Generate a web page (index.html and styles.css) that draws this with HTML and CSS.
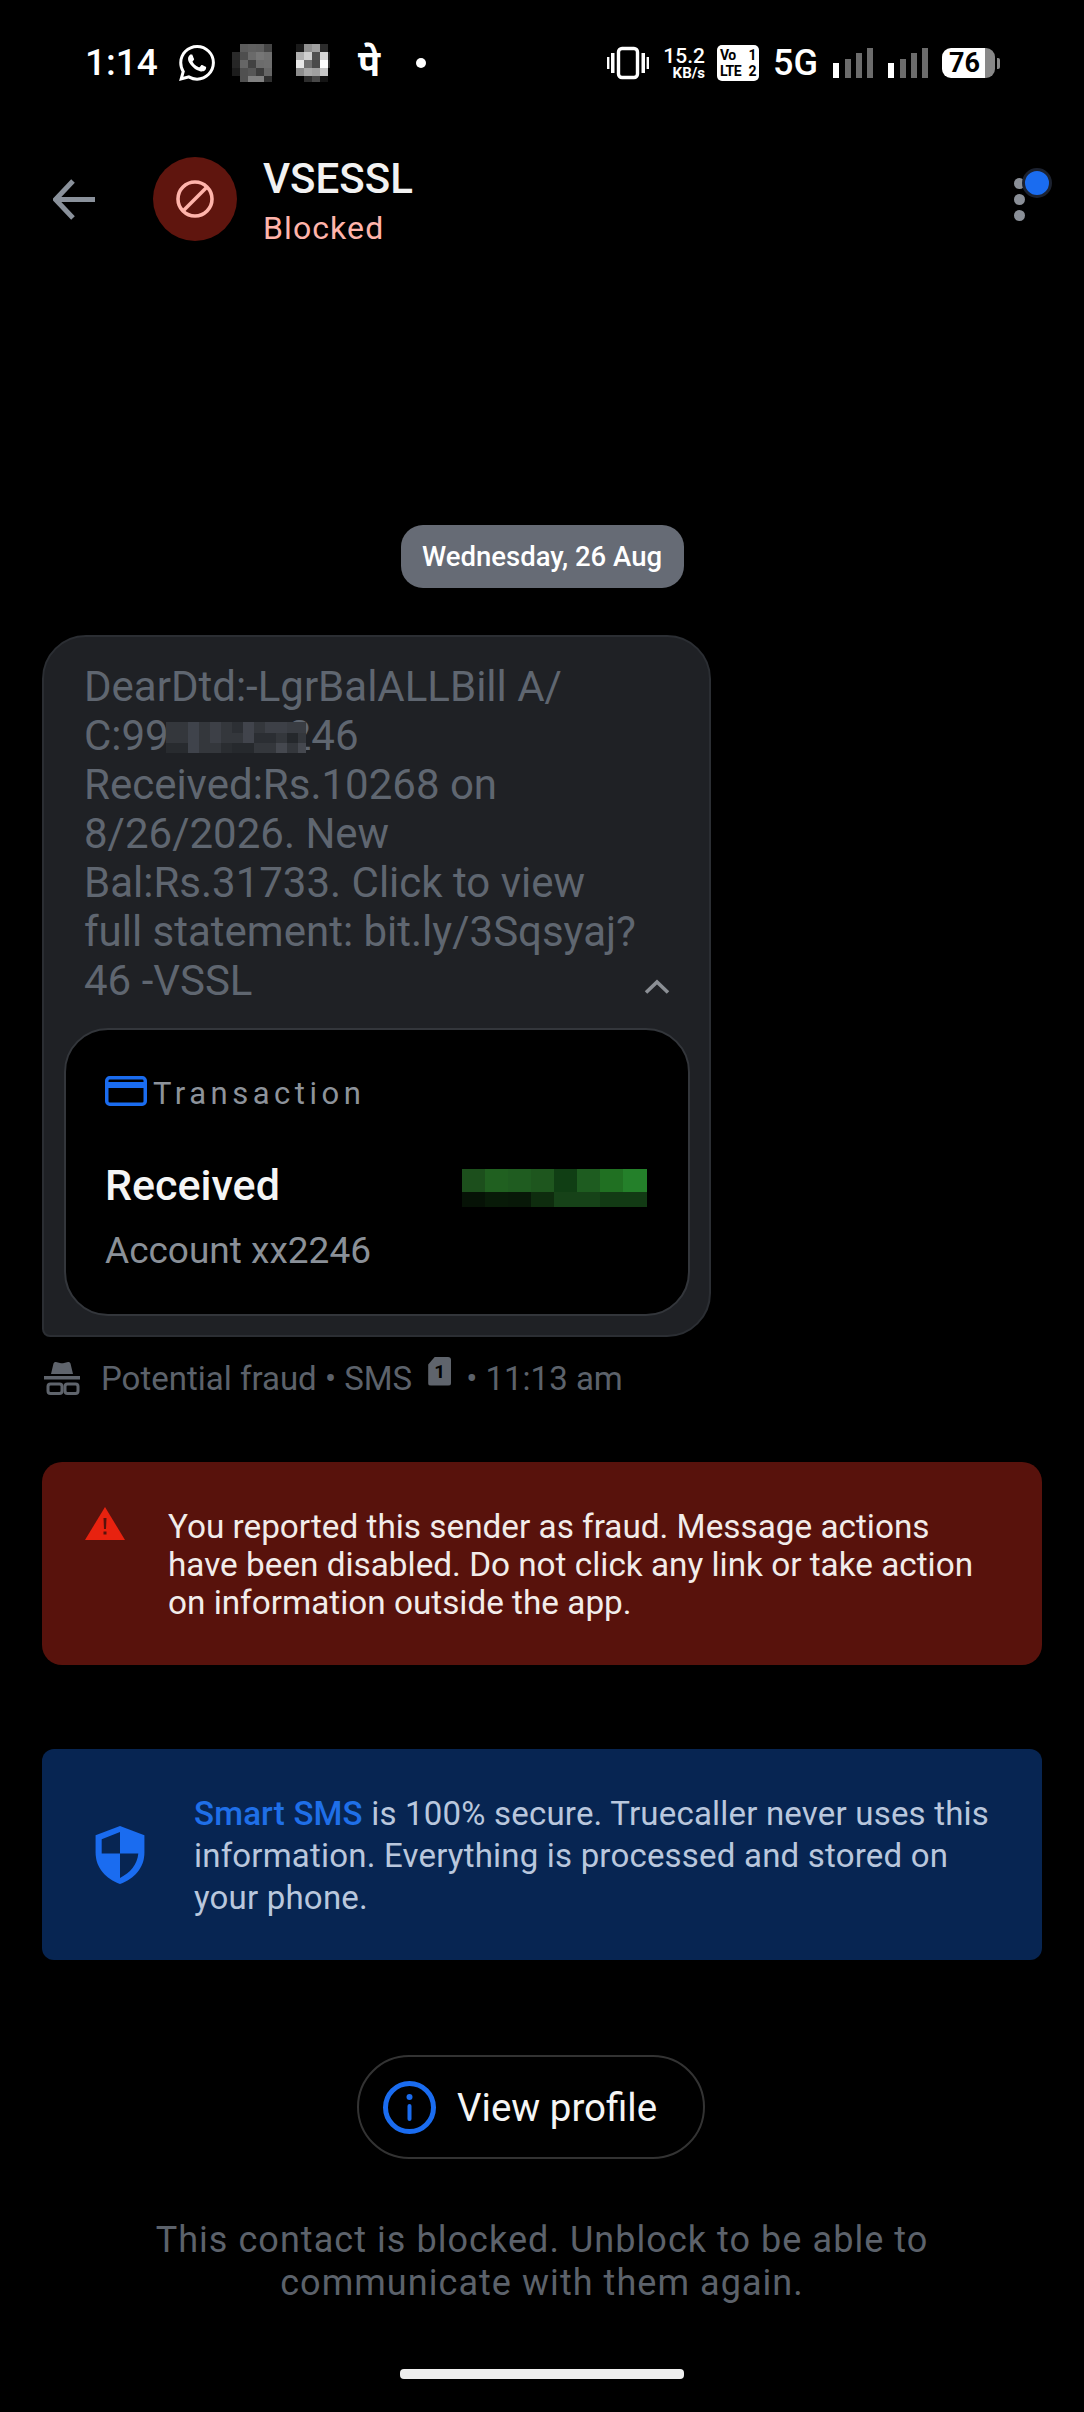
FILE: index.html
```html
<!DOCTYPE html>
<html lang="en">
<head>
<meta charset="utf-8">
<title>VSESSL</title>
<link rel="stylesheet" href="styles.css">
</head>
<body>
<div class="screen">
  <div class="status">
    <span class="time">1:14</span>
    <svg class="wa" viewBox="0 0 24 24" width="36" height="36"><path fill="#fff" d="M17.472 14.382c-.297-.149-1.758-.867-2.03-.967-.273-.099-.471-.148-.67.15-.197.297-.767.966-.94 1.164-.173.199-.347.223-.644.075-.297-.15-1.255-.463-2.39-1.475-.883-.788-1.48-1.761-1.653-2.059-.173-.297-.018-.458.13-.606.134-.133.298-.347.446-.52.149-.174.198-.298.298-.497.099-.198.05-.371-.025-.52-.075-.149-.669-1.612-.916-2.207-.242-.579-.487-.5-.669-.51-.173-.008-.371-.01-.57-.01-.198 0-.52.074-.792.372-.272.297-1.04 1.016-1.04 2.479 0 1.462 1.065 2.875 1.213 3.074.149.198 2.096 3.2 5.077 4.487.709.306 1.262.489 1.694.625.712.227 1.36.195 1.871.118.571-.085 1.758-.719 2.006-1.413.248-.694.248-1.289.173-1.413-.074-.124-.272-.198-.57-.347m-5.421 7.403h-.004a9.87 9.87 0 01-5.031-1.378l-.361-.214-3.741.982.998-3.648-.235-.374a9.86 9.86 0 01-1.51-5.26c.001-5.45 4.436-9.884 9.888-9.884 2.64 0 5.122 1.03 6.988 2.898a9.825 9.825 0 012.893 6.994c-.003 5.45-4.437 9.884-9.885 9.884m8.413-18.297A11.815 11.815 0 0012.05 0C5.495 0 .16 5.335.157 11.892c0 2.096.547 4.142 1.588 5.945L.057 24l6.305-1.654a11.882 11.882 0 005.683 1.448h.005c6.554 0 11.89-5.335 11.893-11.893a11.821 11.821 0 00-3.48-8.413z"/></svg>
    <svg class="mos1" viewBox="0 0 40 38" width="40" height="38" shape-rendering="crispEdges">
      <rect x="8" width="8" height="8" fill="#5c5c5c"/><rect x="16" width="8" height="8" fill="#606060"/><rect x="24" width="8" height="8" fill="#5e5e5e"/><rect x="32" width="8" height="8" fill="#454545"/>
      <rect y="8" width="8" height="8" fill="#2a2a2a"/><rect x="8" y="8" width="8" height="8" fill="#4e4e4e"/><rect x="16" y="8" width="8" height="8" fill="#6a6a6a"/><rect x="24" y="8" width="8" height="8" fill="#767676"/><rect x="32" y="8" width="8" height="8" fill="#707070"/>
      <rect y="16" width="8" height="8" fill="#262626"/><rect x="8" y="16" width="8" height="8" fill="#666"/><rect x="16" y="16" width="8" height="8" fill="#424242"/><rect x="24" y="16" width="8" height="8" fill="#6c6c6c"/><rect x="32" y="16" width="8" height="8" fill="#6e6e6e"/>
      <rect y="24" width="8" height="8" fill="#1c1c1c"/><rect x="8" y="24" width="8" height="8" fill="#505050"/><rect x="16" y="24" width="8" height="8" fill="#565656"/><rect x="24" y="24" width="8" height="8" fill="#3c3c3c"/><rect x="32" y="24" width="8" height="8" fill="#666"/>
      <rect x="8" y="32" width="8" height="6" fill="#505050"/><rect x="16" y="32" width="16" height="6" fill="#808080"/><rect x="32" y="32" width="8" height="6" fill="#303030"/>
    </svg>
    <svg class="mos2" viewBox="0 0 34 38" width="34" height="38" shape-rendering="crispEdges">
      <rect width="8" height="8" fill="#1a1a1a"/><rect x="8" width="8" height="8" fill="#909090"/><rect x="16" width="8" height="8" fill="#a0a0a0"/><rect x="24" width="8" height="8" fill="#2c2c2c"/>
      <rect y="8" width="8" height="8" fill="#b0b0b0"/><rect x="8" y="8" width="8" height="8" fill="#d0d0d0"/><rect x="16" y="8" width="8" height="8" fill="#505050"/><rect x="24" y="8" width="8" height="8" fill="#d8d8d8"/><rect x="32" y="8" width="2" height="8" fill="#222"/>
      <rect y="16" width="8" height="8" fill="#e8e8e8"/><rect x="8" y="16" width="8" height="8" fill="#707070"/><rect x="16" y="16" width="8" height="8" fill="#4a4a4a"/><rect x="24" y="16" width="8" height="8" fill="#fff"/><rect x="32" y="16" width="2" height="8" fill="#333"/>
      <rect y="24" width="8" height="8" fill="#8c8c8c"/><rect x="8" y="24" width="8" height="8" fill="#a8a8a8"/><rect x="16" y="24" width="8" height="8" fill="#a0a0a0"/><rect x="24" y="24" width="8" height="8" fill="#c8c8c8"/>
      <rect x="8" y="32" width="8" height="6" fill="#2e2e2e"/><rect x="16" y="32" width="8" height="6" fill="#484848"/><rect x="24" y="32" width="8" height="6" fill="#141414"/>
    </svg>
    <span class="pe">पे</span>
    <span class="sdot"></span>
    <div class="sright">
      <svg class="vib" viewBox="0 0 42 34" width="42" height="34"><rect x="11.5" y="2.5" width="19" height="29" rx="3.5" fill="none" stroke="#fff" stroke-width="3.4"/><path fill="#fff" d="M4 7h3.500v20H4zM34.500 7H38v20h-3.500zM0 11h2.400v12H0zM39.600 11H42v12h-2.400z"/></svg>
      <div class="speed"><span class="sp1">15.2</span><span class="sp2">KB/s</span></div>
      <div class="volte"><span>Vo</span><span>1</span><span>LTE</span><span>2</span></div>
      <span class="fiveg">5G</span>
      <svg class="sig" viewBox="0 0 40 30" width="40" height="30" shape-rendering="crispEdges"><rect y="15" width="6" height="15" fill="#fff"/><rect x="11.500" y="11" width="6" height="19" fill="#6c6c6c"/><rect x="23" y="5" width="6" height="25" fill="#6c6c6c"/><rect x="34" width="6" height="30" fill="#6c6c6c"/></svg>
      <svg class="sig sig2" viewBox="0 0 40 30" width="40" height="30" shape-rendering="crispEdges"><rect y="15" width="6" height="15" fill="#fff"/><rect x="11.500" y="11" width="6" height="19" fill="#6c6c6c"/><rect x="23" y="5" width="6" height="25" fill="#6c6c6c"/><rect x="34" width="6" height="30" fill="#6c6c6c"/></svg>
      <div class="batt"><span class="batt-n">76</span></div>
      <span class="tip"></span>
    </div>
  </div>

  <div class="header">
    <svg class="back" viewBox="0 0 42 41" width="42" height="41"><path d="M42 20.500H5M20 2 2.500 20.500 20 39" fill="none" stroke="#8a919b" stroke-width="5"/></svg>
    <div class="avatar">
      <svg viewBox="0 0 38 38" width="38" height="38"><circle cx="19" cy="19" r="17" fill="none" stroke="#ffb4ab" stroke-width="3.600"/><path d="M7 31 31 7" stroke="#ffb4ab" stroke-width="3.600"/></svg>
    </div>
    <div class="peer">
      <div class="peer-name">VSESSL</div>
      <div class="peer-state">Blocked</div>
    </div>
    <div class="more">
      <span class="more-dot"></span><span class="more-dot"></span><span class="more-dot"></span>
      <span class="badge"></span>
    </div>
  </div>

  <div class="date">Wednesday, 26 Aug</div>

  <div class="bubble">
    <div class="msg">
      DearDtd:-LgrBalALLBill A/<br>
      C:99<svg class="mask" viewBox="0 0 140 31" width="140" height="31" shape-rendering="crispEdges">
        <rect width="140" height="31" fill="#34373c"/>
        <rect x="22" width="11" height="31" fill="#3f434b"/><rect x="44" width="11" height="21" fill="#3d4047"/><rect x="66" width="11" height="11" fill="#2c2f34"/><rect x="77" width="11" height="21" fill="#41444c"/><rect x="99" width="22" height="11" fill="#3d4047"/><rect x="121" width="19" height="11" fill="#393c42"/>
        <rect y="21" width="22" height="10" fill="#282b2f"/><rect x="55" y="21" width="11" height="10" fill="#2a2d31"/><rect x="66" y="21" width="22" height="10" fill="#26292d"/><rect x="88" y="11" width="22" height="10" fill="#2b2e33"/><rect x="110" y="21" width="11" height="10" fill="#45484f"/><rect x="121" y="11" width="11" height="10" fill="#25282c"/><rect x="132" y="21" width="8" height="10" fill="#45484f"/>
      </svg>246<br>
      Received:Rs.10268 on<br>
      8/26/2026. New<br>
      Bal:Rs.31733. Click to view<br>
      full statement: bit.ly/3Sqsyaj?
      <div class="msg-last"><span>46 -VSSL</span><svg class="chev" viewBox="0 0 26 15" width="26" height="15"><path d="M2 13.500 13 3l11 10.500" fill="none" stroke="#8b8f95" stroke-width="3.600"/></svg></div>
    </div>
    <div class="tx">
      <div class="tx-head">
        <svg viewBox="0 0 42 30" width="42" height="30"><rect x="1.750" y="1.750" width="38.500" height="26.500" rx="3" fill="none" stroke="#1a6cf0" stroke-width="3.500"/><rect x="2" y="6" width="38" height="6" fill="#1a6cf0"/></svg>
        <span class="tx-label">Transaction</span>
      </div>
      <div class="tx-row">
        <span class="tx-title">Received</span>
        <svg class="amount" viewBox="0 0 185 38" width="185" height="38" shape-rendering="crispEdges">
          <rect width="24" height="23" fill="#1c4f1c"/><rect x="23" width="24" height="23" fill="#206020"/><rect x="46" width="24" height="23" fill="#1f5c20"/><rect x="69" width="24" height="23" fill="#1e561e"/><rect x="92" width="24" height="23" fill="#103e14"/><rect x="115" width="24" height="23" fill="#1e5c20"/><rect x="138" width="24" height="23" fill="#207022"/><rect x="161" width="24" height="23" fill="#24802a"/>
          <rect y="23" width="24" height="15" fill="#061206"/><rect x="23" y="23" width="24" height="15" fill="#081a08"/><rect x="46" y="23" width="24" height="15" fill="#081808"/><rect x="69" y="23" width="24" height="15" fill="#0e2c0e"/><rect x="92" y="23" width="24" height="15" fill="#164218"/><rect x="115" y="23" width="24" height="15" fill="#164218"/><rect x="138" y="23" width="24" height="15" fill="#123a14"/><rect x="161" y="23" width="24" height="15" fill="#123a14"/>
        </svg>
      </div>
      <div class="tx-acct">Account xx2246</div>
    </div>
  </div>

  <div class="meta">
    <svg class="spy" viewBox="0 0 38 34" width="38" height="34"><path fill="#5f646c" d="M7 13 9.500 2.500Q10 .5 12 1l4 1q2 .5 4 0l4-1q2-.5 2.500 1.500L29 13zM0 15h36v3.500H0z"/><g fill="none" stroke="#5f646c" stroke-width="3"><rect x="4" y="23" width="14" height="9.500" rx="2.500"/><rect x="21" y="23" width="13" height="9.500" rx="2.500"/></g></svg>
    <span class="meta-t">Potential fraud • SMS</span>
    <span class="sim">1</span>
    <span class="meta-t">• 11:13 am</span>
  </div>

  <div class="alert">
    <svg viewBox="0 0 40 33" width="40" height="33"><path d="M20 0 40 33H0z" fill="#e8220f"/><path d="M18.500 11h3l-.5 11h-2zM18.500 24.500h3v3h-3z" fill="#58120c"/></svg>
    <p>You reported this sender as fraud. Message actions<br>have been disabled. Do not click any link or take action<br>on information outside the app.</p>
  </div>

  <div class="secure">
    <svg viewBox="0 0 48 57" width="50" height="58"><path fill="#1a6cf0" d="M24 0 48 9v17c0 15-10 26-24 31C10 52 0 41 0 26V9z"/><path fill="#072552" d="M6 13 24 6v21H6zM24 27h18c-1 11-8 19-18 24z"/></svg>
    <p><b>Smart SMS</b> is 100% secure. Truecaller never uses this<br>information. Everything is processed and stored on<br>your phone.</p>
  </div>

  <div class="profile">
    <svg viewBox="0 0 53 53" width="53" height="53"><circle cx="26.500" cy="26.500" r="24" fill="none" stroke="#1a6cf0" stroke-width="5"/><circle cx="26.500" cy="16" r="3" fill="#1a6cf0"/><rect x="24.500" y="23" width="4" height="17" rx="2" fill="#1a6cf0"/></svg>
    <span>View profile</span>
  </div>

  <p class="note">This contact is blocked. Unblock to be able to<br>communicate with them again.</p>

  <div class="home"></div>
</div>
</body>
</html>
```
FILE: styles.css
```css
* { box-sizing: border-box; }
html, body { margin: 0; padding: 0; background: #000; }
.screen { width: 1084px; height: 2412px; overflow: hidden; background: #000; color: #fff; font-family: Roboto, "Noto Sans", sans-serif; }
svg { display: block; flex: none; }

.status { display: flex; align-items: center; height: 126px; padding: 0 84px 0 85px; }
.time { font-size: 37px; font-weight: 500; line-height: 40px; width: 72px; white-space: nowrap; }
.wa { margin-left: 22px; }
.mos1 { margin-left: 17px; }
.mos2 { margin-left: 24px; }
.pe { margin-left: 28px; width: 26px; font-size: 36px; font-weight: 700; line-height: 40px; font-family: "Noto Sans", Roboto, sans-serif; }
.sdot { margin-left: 32px; width: 10px; height: 10px; border-radius: 50%; background: #fff; }
.sright { display: flex; align-items: center; margin-left: auto; }
.vib { margin-right: 15px; }
.speed { display: flex; flex-direction: column; align-items: flex-end; width: 41px; margin-right: 12px; font-weight: 500; }
.sp1 { font-size: 21px; line-height: 20px; }
.sp2 { font-size: 15px; line-height: 15px; font-weight: 700; }
.volte { display: grid; grid-template-columns: auto auto; justify-content: space-between; width: 42px; height: 36px; padding: 2px 3px; border-radius: 5px; background: #fff; color: #000; font-size: 14px; line-height: 16px; font-weight: 700; letter-spacing: -0.5px; }
.fiveg { margin-left: 14px; width: 44px; font-size: 36px; font-weight: 500; line-height: 36px; white-space: nowrap; }
.sig { margin-left: 16px; }
.sig2 { margin-left: 15px; }
.batt { display: flex; justify-content: center; align-items: center; width: 53px; height: 30px; margin-left: 14px; padding-right: 8px; border-radius: 9px; background: linear-gradient(90deg, #fff 82%, #888 82%); }
.batt-n { color: #000; font-size: 27px; font-weight: 700; line-height: 30px; }
.tip { width: 3px; height: 11px; margin-left: 2px; background: #888; border-radius: 0 2px 2px 0; }

.header { display: flex; align-items: center; height: 88px; margin-top: 29px; padding: 0 59px 0 53px; }
.avatar { display: flex; align-items: center; justify-content: center; width: 84px; height: 84px; margin-left: 58px; border-radius: 50%; background: #5f150e; }
.peer { align-self: flex-start; margin-left: 26px; }
.peer-name { font-size: 42px; line-height: 48px; font-weight: 500; color: #f2f2f2; }
.peer-state { margin-top: 5px; font-size: 32px; line-height: 40px; letter-spacing: 1.1px; color: #ffb4ab; }
.more { position: relative; display: flex; flex-direction: column; gap: 5px; margin-left: auto; }
.more-dot { width: 11px; height: 11px; border-radius: 50%; background: #8a8f97; }
.badge { position: absolute; left: 8px; top: -10px; width: 30px; height: 30px; border-radius: 50%; background: #1a6cf0; border: 3px solid #1c2230; }

.date { display: flex; align-items: center; justify-content: center; width: 283px; height: 63px; margin: 282px auto 0; border-radius: 22px; background: #666b75; font-size: 27.5px; font-weight: 500; white-space: nowrap; }

.bubble { width: 669px; height: 702px; margin: 47px 0 0 42px; padding-top: 25px; border: 2px solid #2b2e33; border-radius: 44px 44px 44px 8px; background: #1f2125; }
.msg { padding: 0 39px 0 40px; font-size: 42px; line-height: 49px; color: #5f6670; white-space: nowrap; }
.mask { display: inline-block; position: relative; z-index: 1; margin: 0 -18px 0 -3px; vertical-align: -3px; }
.msg-last { display: flex; justify-content: space-between; }
.chev { margin-top: 23px; }
.tx { height: 288px; margin: 23px 19px 0 20px; padding: 46px 41px 0 39px; border: 2px solid #33363b; border-radius: 44px; background: #000; }
.tx-head { display: flex; align-items: center; gap: 6px; height: 30px; }
.tx-label { padding-top: 5px; font-size: 31px; line-height: 34px; letter-spacing: 4.5px; color: #8d939b; }
.tx-row { display: flex; justify-content: space-between; align-items: flex-start; height: 50px; margin-top: 63px; }
.tx-title { margin-top: -3px; font-size: 43px; line-height: 38px; font-weight: 500; color: #f5f5f5; }
.tx-acct { margin-top: 10px; font-size: 37px; line-height: 44px; color: #8a9098; }

.meta { display: flex; align-items: center; height: 50px; margin: 16px 0 0 44px; font-size: 33px; color: #5c626b; }
.spy { margin-right: 19px; }
.sim { display: flex; align-items: center; justify-content: center; width: 23px; height: 29px; margin: -14px 15px 0 16px; border-radius: 3px; background: #5f646c; clip-path: polygon(30% 0, 100% 0, 100% 100%, 0 100%, 0 28%); color: #000; font-size: 19px; font-weight: 700; }

.alert { display: flex; align-items: flex-start; gap: 43px; width: 1000px; height: 203px; margin: 59px 0 0 42px; padding: 45px 0 0 43px; border-radius: 20px; background: #58120c; }
.alert p { margin: 1px 0 0; font-size: 33.3px; line-height: 38px; color: #f2ecea; white-space: nowrap; }

.secure { display: flex; align-items: center; gap: 49px; width: 1000px; height: 211px; margin: 84px 0 0 42px; padding-left: 53px; border-radius: 12px; background: #072552; }
.secure p { margin: 2px 0 0; font-size: 33px; line-height: 42px; letter-spacing: 0.2px; color: #b9c7dd; white-space: nowrap; }
.secure b { font-weight: 500; color: #1f6fe8; }

.profile { display: flex; align-items: center; gap: 21px; width: 348px; height: 104px; margin: 95px 0 0 357px; padding-left: 24px; border: 2px solid #333; border-radius: 52px; font-size: 38.5px; color: #f5f5f5; white-space: nowrap; }

.note { margin: 60px 0 0; text-align: center; font-size: 36px; line-height: 43px; letter-spacing: 1.05px; color: #5c626b; }

.home { width: 284px; height: 10px; margin: 64px auto 0; border-radius: 4px; background: #eee; }
```
